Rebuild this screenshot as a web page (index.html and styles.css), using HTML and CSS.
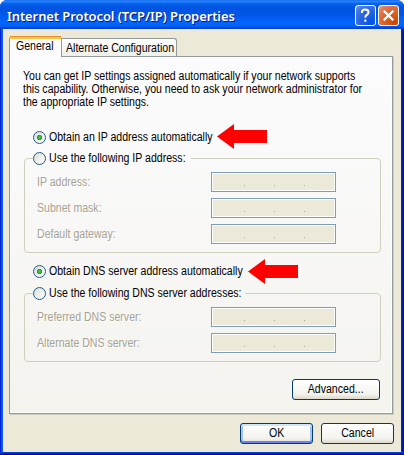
FILE: index.html
```
<!DOCTYPE html>
<html lang="en">
<head>
<meta charset="utf-8">
<title>Internet Protocol (TCP/IP) Properties</title>
<link rel="stylesheet" href="styles.css">
</head>
<body>
<div class="window">
  <header class="titlebar">
    <h1>Internet Protocol (TCP/IP) Properties</h1>
    <button class="cap help" aria-label="Help"><svg viewBox="0 0 21 21"><path d="M7 8V6.5Q7.5 4.5 10.3 4.5Q13.5 4.5 13.5 7.2Q13.5 8.7 11.8 9.8Q10.3 10.8 10.3 12.7M10.3 14.5V16.7" fill="none" stroke="#fff" stroke-width="2"/></svg></button>
    <button class="cap close" aria-label="Close"><svg viewBox="0 0 21 21"><path d="M5.7 5.7L15.3 15.3M15.3 5.7L5.7 15.3" stroke="#fff" stroke-width="2.3"/></svg></button>
  </header>
  <main class="client">
    <nav class="tabs">
      <div class="tab active"><span>General</span></div>
      <div class="tab"><span>Alternate Configuration</span></div>
    </nav>
    <section class="page">
      <p class="intro"><span>You can get IP settings assigned automatically if your network supports<br>this capability. Otherwise, you need to ask your network administrator for<br>the appropriate IP settings.</span></p>
      <div class="option first"><i class="radio on"></i><span>Obtain an IP address automatically</span>
        <svg class="arrow a1" viewBox="0 0 50 25"><path d="M0 12.5L17 0V6H50V19H17V25Z" fill="#f00"/></svg></div>
      <fieldset class="group ip">
        <legend><i class="radio"></i><span>Use the following IP address:</span></legend>
        <div class="row"><span>IP address:</span><div class="field"><b></b><b></b><b></b></div></div>
        <div class="row"><span>Subnet mask:</span><div class="field"><b></b><b></b><b></b></div></div>
        <div class="row"><span>Default gateway:</span><div class="field"><b></b><b></b><b></b></div></div>
      </fieldset>
      <div class="option second"><i class="radio on"></i><span>Obtain DNS server address automatically</span>
        <svg class="arrow a2" viewBox="0 0 50 25"><path d="M0 12.5L17 0V6H50V19H17V25Z" fill="#f00"/></svg></div>
      <fieldset class="group dns">
        <legend><i class="radio"></i><span>Use the following DNS server addresses:</span></legend>
        <div class="row"><span>Preferred DNS server:</span><div class="field"><b></b><b></b><b></b></div></div>
        <div class="row"><span>Alternate DNS server:</span><div class="field"><b></b><b></b><b></b></div></div>
      </fieldset>
      <button class="btn advanced"><span>Advanced...</span></button>
    </section>
    <footer class="actions">
      <button class="btn ok"><span>OK</span></button>
      <button class="btn cancel"><span>Cancel</span></button>
    </footer>
  </main>
</div>
</body>
</html>
```

FILE: styles.css
```
* { box-sizing: border-box; }
body { margin: 0; background: #fff; overflow: hidden; }
.window {
  width: 404px; height: 455px; padding: 0 3px 3px;
  border-radius: 7px 7px 0 0;
  background: linear-gradient(90deg, #0019cf 0, #0831d9 1px, #166aee 2px, #0855dd 3px, #0855dd 401px, #0138d0 401px, #001ea0 402px, #00138c 404px);
  box-shadow: inset 0 -1px #00138c, inset 0 -2px #001ea0, inset 0 -3px #0441d8;
  font: 12px/13px "Liberation Sans", Arial, sans-serif; color: #000;
}
.titlebar {
  height: 29px; margin: 0 -3px; padding: 4px 5px 0 7px; display: flex; gap: 2px;
  border-radius: 7px 7px 0 0;
  background: linear-gradient(#0058e6 0, #3a8eff 1px, #1a78f8 2px, #0360e8 4px, #0054e3 7px, #0055e5 14px, #0260f4 19px, #0267ff 24px, #0062f6 26px, #0043cf 28px, #0040c8 29px);
}
h1 {
  flex: 1; margin: 0; color: #fff; white-space: nowrap;
  font: 600 13px/24px "Noto Sans", sans-serif; letter-spacing: -.1px;
  text-shadow: 1px 1px #0a1883;
}
button { font: inherit; color: inherit; padding: 0; }
span { display: inline-block; transform: scaleX(.88); transform-origin: 0 50%; white-space: nowrap; }
.cap { width: 21px; height: 21px; margin-top: 1px; border: 1px solid #fff; border-radius: 3px; }
.cap svg { display: block; width: 21px; height: 21px; margin: -1px; }
.help { background: radial-gradient(circle at 85% 90%, #0054e9 0, #2663e0 50%, #4479e4 80%, #7ba2e9 100%); }
.close { background: radial-gradient(circle at 85% 90%, #cc4600 0, #dc6527 50%, #e37855 80%, #f0a693 100%); }
.client { height: 423px; padding: 7px 8px 0 6px; background: #ece9d8; }
.tabs { display: flex; align-items: flex-end; height: 20px; }
.tab {
  height: 18px; width: 115px; padding: 3px 0 0 4px; white-space: nowrap;
  border: 1px solid #919b9c; border-width: 1px 1px 0 0; border-radius: 0 3px 0 0;
  background: linear-gradient(#fff, #f0f0ea);
}
.tab.active {
  position: relative; height: 21px; width: 53px; margin-bottom: -1px; padding: 1px 0 0 6px;
  border: 1px solid #919b9c; border-top: 3px solid #ffc73c; border-bottom: 0; border-radius: 3px 3px 0 0;
  background: #fcfcfe;
}
.tab.active::before { content: ""; position: absolute; left: 0; right: 0; top: -3px; height: 1px; background: #e68b2c; }
.page {
  display: flow-root; width: 384px; height: 358px; padding: 13px 12px 0 13px;
  border: 1px solid #919b9c;
  background: linear-gradient(#fcfcfe, #f4f3ee);
  box-shadow: inset -1px -1px #fff, 1px 1px #d0cebf;
}
.intro { margin: 0; height: 39px; }
.option { position: relative; display: flex; align-items: center; height: 13px; padding-left: 10px; gap: 3px; }
.first { margin-top: 22px; }
.second { margin-top: 12px; }
.radio {
  flex: none; width: 13px; height: 13px; border: 1px solid #265b84; border-radius: 50%;
  background: linear-gradient(135deg, #dcdcd7, #fff);
}
.radio.on { background: radial-gradient(circle, #4ed04b 0, #21a121 2.3px, transparent 3px), linear-gradient(135deg, #dcdcd7, #fff); }
.arrow { position: absolute; width: 50px; height: 25px; }
.a1 { left: 194px; top: -7px; }
.a2 { left: 225px; top: -6px; }
.group {
  width: 357px; min-width: 0; margin: 8px 0 0 1px; padding: 0 0 0 12px;
  border: 1px solid #d0d0bf; border-radius: 4px;
}
.ip { height: 101px; }
.dns { height: 75px; margin-top: 9px; }
legend { display: flex; align-items: center; gap: 3px; width: 158px; height: 13px; margin-left: -4px; padding: 0; }
.dns legend { width: 212px; }
.row { display: flex; align-items: center; height: 20px; margin-bottom: 6px; color: #a5a293; text-shadow: 1px 1px #fff; }
legend + .row { margin-top: 7px; }
.row span { width: 174px; }
.field {
  width: 125px; height: 20px; border: 1px solid #7f9db9; box-shadow: inset 0 0 0 1px #fff; background: #ece9d8;
  display: flex; gap: 29px; padding: 12px 0 0 32px;
}
.field b { width: 1px; height: 1px; background: #b8a496; }
.btn {
  height: 21px; border: 1px solid #003c74; border-radius: 3px; text-align: center;
  background: linear-gradient(#fff, #f4f3ee 75%, #dcd8cb);
}
.btn span { transform-origin: 50% 50%; }
.advanced { display: block; width: 88px; margin: 17px 0 0 auto; }
.actions { display: flex; justify-content: flex-end; gap: 8px; padding-top: 9px; margin-right: -1px; }
.actions .btn { width: 73px; }
.ok { box-shadow: inset 0 2px #cee7ff, inset 0 -2px #6982ee, inset 2px 0 #a6c3f5, inset -2px 0 #a6c3f5; }
```
